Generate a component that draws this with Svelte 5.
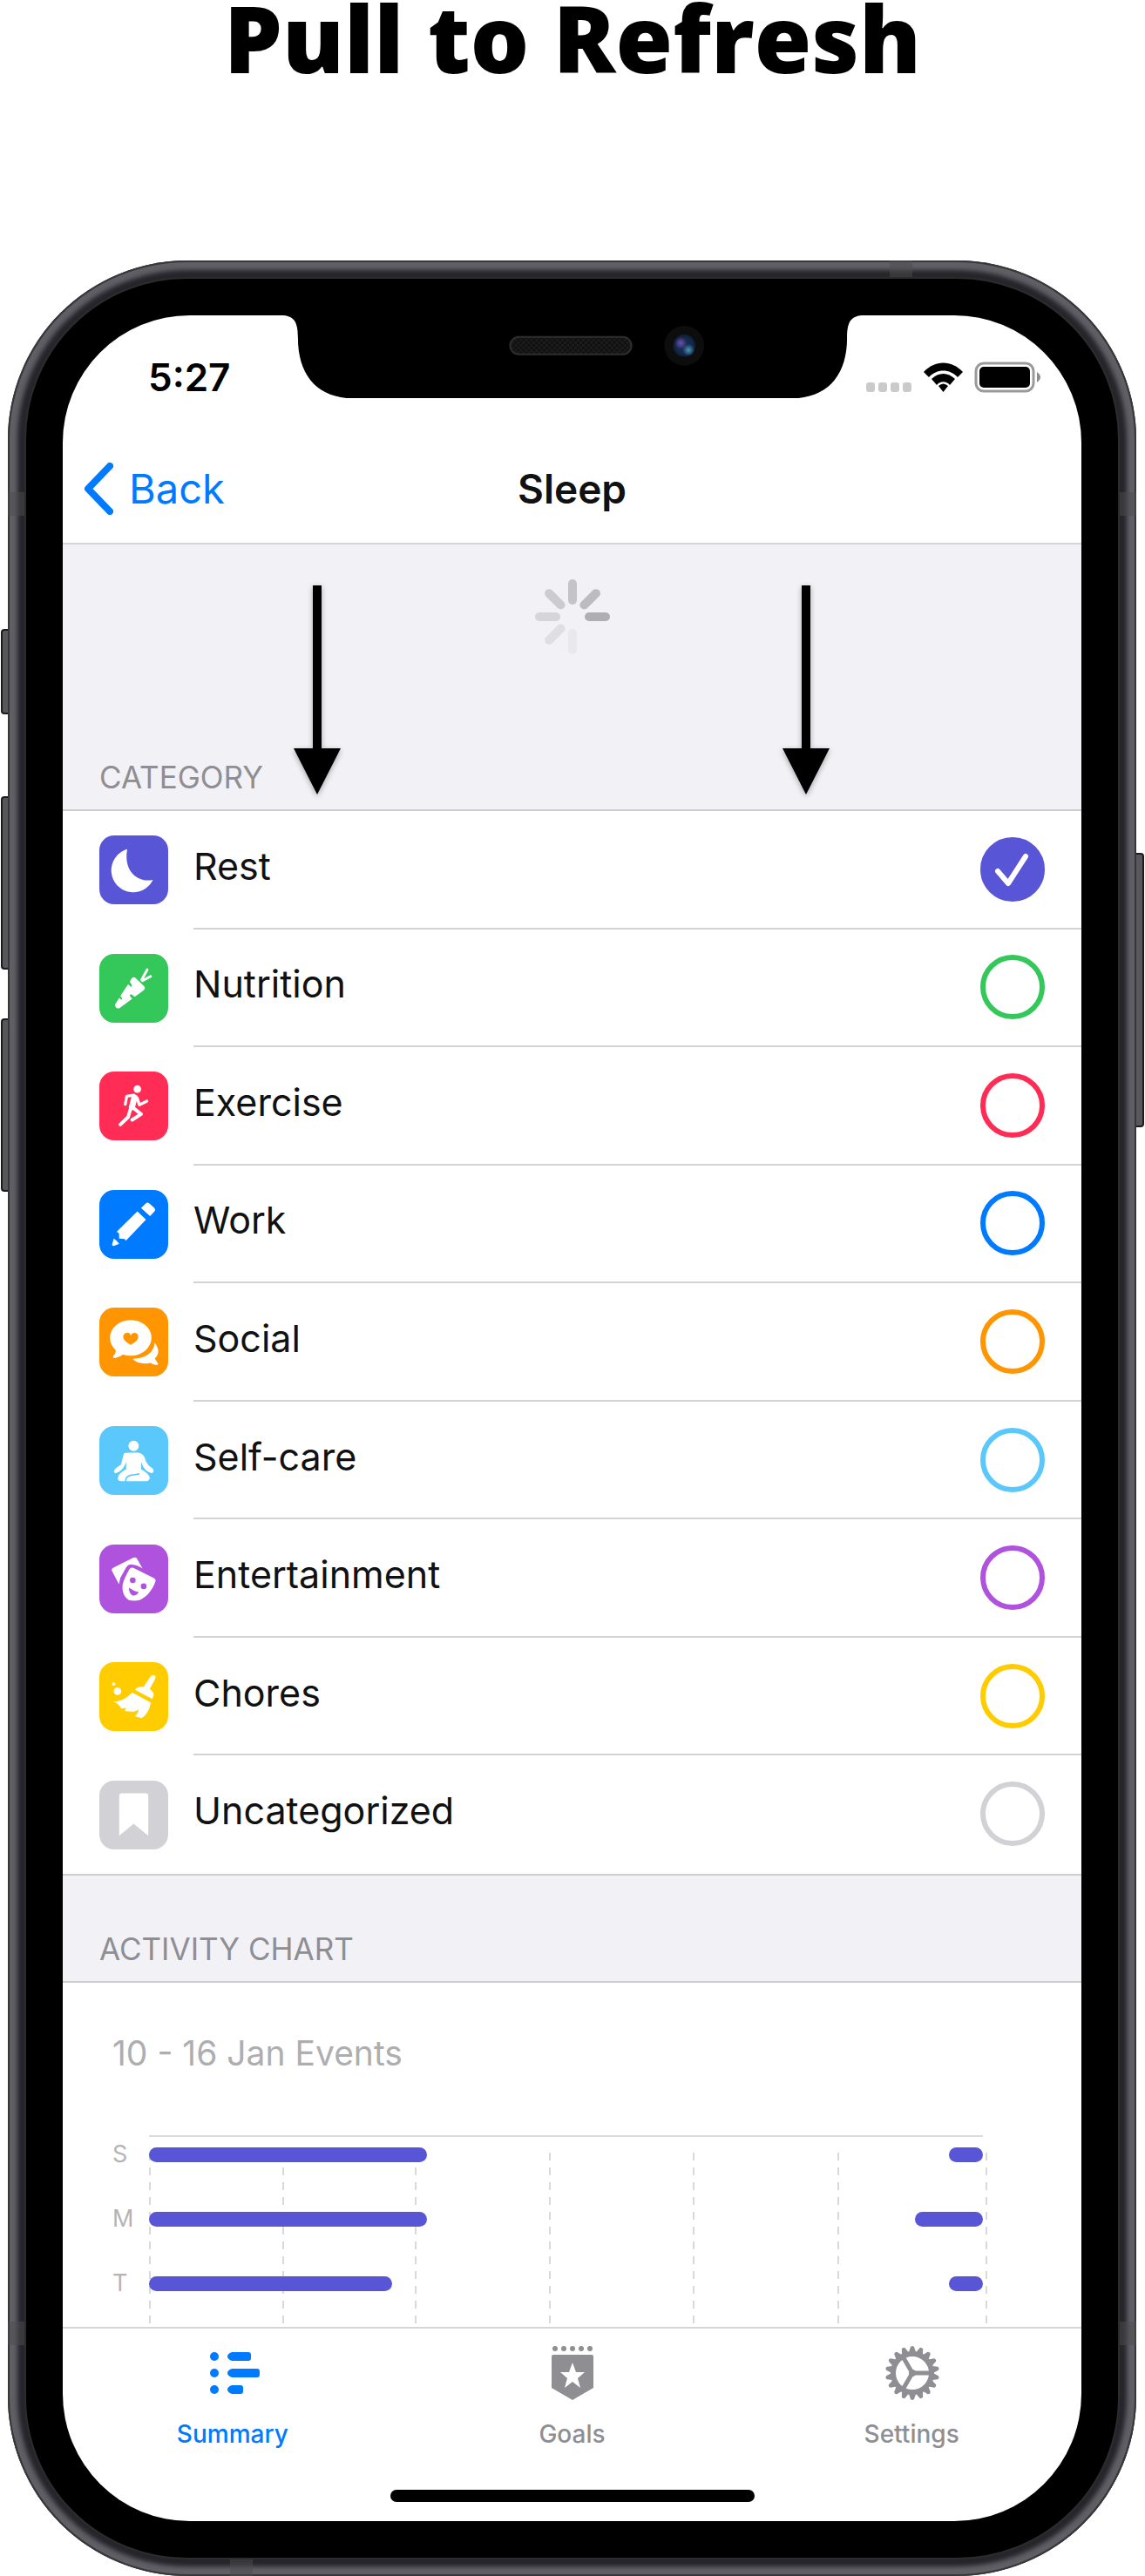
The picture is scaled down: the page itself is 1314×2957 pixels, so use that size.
<script>
  const categories = [
    { id: 'rest', name: 'Rest', color: '#5856d6' },
    { id: 'nutrition', name: 'Nutrition', color: '#34c759' },
    { id: 'exercise', name: 'Exercise', color: '#ff2d55' },
    { id: 'work', name: 'Work', color: '#007aff' },
    { id: 'social', name: 'Social', color: '#ff9500' },
    { id: 'selfcare', name: 'Self-care', color: '#5ac8fa' },
    { id: 'entertainment', name: 'Entertainment', color: '#af52de' },
    { id: 'chores', name: 'Chores', color: '#ffcc00' },
    { id: 'uncategorized', name: 'Uncategorized', color: '#d1d1d6' }
  ];
  let selected = $state('rest');

  // Bar starts and widths, in percent of the plotted day
  const days = [
    { day: 'S', bars: [{ from: 0, width: 33.3 }, { from: 95.9, width: 4.1 }] },
    { day: 'M', bars: [{ from: 0, width: 33.3 }, { from: 91.9, width: 8.1 }] },
    { day: 'T', bars: [{ from: 0, width: 29.2 }, { from: 95.9, width: 4.1 }] }
  ];
  const gridlines = [0, 16, 31.9, 48, 65.2, 82.5, 100.3];

  const spokes = [
    { angle: 90, color: '#aeaeb3' },
    { angle: 45, color: '#bbbbc0' },
    { angle: 0, color: '#c3c3c8' },
    { angle: 315, color: '#cbcbd0' },
    { angle: 270, color: '#d5d5da' },
    { angle: 225, color: '#dedee3' },
    { angle: 180, color: '#e8e8ed' }
  ];
  const teeth = Array.from({ length: 18 }, (_, i) => i * 20);
</script>

{#snippet pullArrow(side)}
  <svg class="arrow {side}" viewBox="0 0 54 240" aria-hidden="true">
    <path d="M22 0h10v187h22L27 240 0 187h22z" />
  </svg>
{/snippet}

<main>
  <h1>Pull to Refresh</h1>

  <div class="phone">
    <i class="key mute"></i>
    <i class="key up"></i>
    <i class="key down"></i>
    <i class="key power"></i>
    <i class="band top"></i>
    <i class="band bottom"></i>
    <i class="band side left high"></i>
    <i class="band side right high"></i>
    <i class="band side left low"></i>
    <i class="band side right low"></i>

    <div class="bezel">
      <div class="screen">
        <svg class="notch" viewBox="0 0 668 96" aria-hidden="true">
          <defs>
            <radialGradient id="lens">
              <stop offset="0" stop-color="#1c2f55" />
              <stop offset="0.7" stop-color="#14294a" />
              <stop offset="1" stop-color="#0e1c30" />
            </radialGradient>
            <radialGradient id="violet">
              <stop offset="0" stop-color="#7150b0" />
              <stop offset="1" stop-color="#7150b0" stop-opacity="0" />
            </radialGradient>
            <radialGradient id="cyan">
              <stop offset="0" stop-color="#4797b8" />
              <stop offset="1" stop-color="#4797b8" stop-opacity="0" />
            </radialGradient>
            <pattern id="mesh" width="6" height="6" patternUnits="userSpaceOnUse">
              <rect width="6" height="6" fill="#101010" />
              <path d="M0 0h3v3H0zM3 3h3v3H3z" fill="#1c1c1c" />
            </pattern>
          </defs>
          <path d="M0 0C14 1 17 10 17 26C17 70 40 96 82 96H586C628 96 651 70 651 26C651 10 654 1 668 0Z" />
          <rect x="262" y="25" width="140" height="20" rx="10" fill="url(#mesh)" stroke="#2e2e2e" stroke-width="2" />
          <circle cx="463" cy="35" r="23" fill="#0d0d0d" />
          <circle cx="463" cy="35" r="13" fill="url(#lens)" />
          <circle cx="459" cy="32" r="7" fill="url(#violet)" />
          <circle cx="468" cy="40" r="7" fill="url(#cyan)" />
        </svg>

        <div class="status">
          <time>5:27</time>
          <svg class="signals" viewBox="0 0 200 36" aria-hidden="true">
            <g fill="#cacaca">
              <rect x="0" y="24" width="10" height="11" rx="3" />
              <rect x="14" y="24" width="10" height="11" rx="3" />
              <rect x="28" y="24" width="10" height="11" rx="3" />
              <rect x="42" y="24" width="10" height="11" rx="3" />
            </g>
            <path d="M66 12C79-2 98-2 111 12L105 18C96 8 81 8 72 18Z" />
            <path d="M75 20C83 12 94 12 102 20L96 27C92 22 85 22 81 27Z" />
            <path d="M83 28Q88.500 23 94 28L88.500 35Z" />
            <rect x="126" y="2" width="66" height="32" rx="9" fill="none" stroke="#9a9a9a" stroke-width="3" />
            <rect x="130" y="6" width="58" height="24" rx="5" />
            <path d="M196 12Q200 15 200 18T196 24Z" fill="#8c8c8c" />
          </svg>
        </div>

        <nav class="bar" aria-label="Navigation">
          <button type="button" class="back">
            <svg viewBox="0 0 34 60" aria-hidden="true">
              <path d="M30 4 5 30 30 56" />
            </svg>
            Back
          </button>
          <h2>Sleep</h2>
        </nav>

        <section class="pull">
          {@render pullArrow('first')}
          <svg class="spinner" viewBox="-43 -43 86 86" role="img" aria-label="Refreshing">
            {#each spokes as spoke}
              <rect x="-5" y="-43" width="10" height="29" rx="5" fill={spoke.color} transform="rotate({spoke.angle})" />
            {/each}
          </svg>
          {@render pullArrow('second')}
          <h3>CATEGORY</h3>
        </section>

        <div class="list" role="radiogroup" aria-label="Category">
          {#each categories as cat}
            <label class="row" style:--tint={cat.color}>
              <svg class="icon" viewBox="28 14 239 239" aria-hidden="true">
                {#if cat.id === 'rest'}
                  <path d="M125 62A76 76 0 1 0 214 168C165 180 110 140 125 62Z" />
                {:else if cat.id === 'nutrition'}
                  <path d="M83 189 97 167 104 173Q109 172 107 168L101 160 128 119 137 128Q142 128 141 123L134 111 140 99Q147 91 154 98L184 127Q189 134 182 140L151 163 139 154Q133 154 134 160L142 170 98 202Q82 206 83 189Z" />
                  <path class="line" d="M194 69 175 104M206 92 178 107" stroke-width="9" />
                {:else if cat.id === 'exercise'}
                  <circle cx="160" cy="75" r="13" />
                  <path class="line" d="M118 128 123 100 148 96M159 105 167 130 193 117" stroke-width="10" />
                  <path class="line" d="M150 104 141 138" stroke-width="21" />
                  <path class="line" d="M138 138 128 172 101 198M143 138 173 162 142 182" stroke-width="12" />
                {:else if cat.id === 'work'}
                  <path d="M173 77 189 61Q195 55 202 61L218 75Q225 82 219 89L204 105ZM160 88 190 117 120 190 116 184 97 183 96 164 88 159ZM78 183Q90 190 97 201L78 208Q70 208 73 201Z" />
                {:else if cat.id === 'social'}
                  <ellipse cx="137" cy="119" rx="72" ry="62" />
                  <path d="M84 155Q88 172 76 182 74 190 84 189 102 184 112 176ZM220 136C236 156 237 176 221 190Q224 199 232 208 233 215 224 213 213 211 206 206C180 212 153 205 144 192 190 191 218 170 220 136Z" />
                  <path class="cut" d="M137 143C120 133 111 125 111 115A13 12 0 0 1 137 112 13 12 0 0 1 163 115C163 125 154 133 137 143Z" />
                {:else if cat.id === 'selfcare'}
                  <circle cx="147" cy="83" r="18" />
                  <path d="M131 106H163Q180 108 186 125 191 148 214 162 221 173 210 178C190 171 180 160 173 138V164Q203 182 203 194 202 205 190 205H104Q92 204 92 196 92 180 121 164V138C114 160 104 171 84 178 73 173 80 162 103 148 107 138 108 125 114 108 131 106Z" />
                  <path class="slit" d="M120 207Q117 187 142 184L167 180" />
                {:else if cat.id === 'entertainment'}
                  <path d="M71 104Q69 98 77 94L145 60Q153 56 158 62L178 97C165 88 150 84 138 83Q128 83 122 92L101 130 96 152ZM133 99Q137 92 146 95L216 130Q225 135 223 142C213 170 195 195 168 207Q150 212 130 207C112 195 106 175 109 152Q115 130 133 99Z" />
                  <circle class="cut" cx="144" cy="138" r="10" />
                  <circle class="cut" cx="182" cy="159" r="10" />
                  <path class="cut" d="M131 164Q147 176 165 180 155 194 142 190 130 182 131 164Z" />
                {:else if cat.id === 'chores'}
                  <circle cx="78" cy="90" r="6" />
                  <circle cx="91" cy="115" r="13" />
                  <path d="M205 65Q213 54 222 61 225 65 221 74L203 107Q215 115 217 126L212 142 152 110Q160 98 181 100ZM142 119 207 155Q200 192 176 208L152 202Q161 194 165 178 150 188 142 186L118 184Q116 180 122 171 112 178 103 174 99 160 75 151 115 150 142 119Z" />
                {:else}
                  <path d="M97 67Q97 58 106 58H189Q198 58 198 67V205L147 164 97 205Z" />
                {/if}
              </svg>
              <span class="name">{cat.name}</span>
              <span class="choice">
                <input type="radio" name="category" value={cat.id} bind:group={selected} />
                {#if selected === cat.id}
                  <svg viewBox="0 0 74 74" aria-hidden="true"><path d="M20 39 32 53 52 22" /></svg>
                {/if}
              </span>
            </label>
          {/each}
        </div>

        <section class="heading">
          <h3>ACTIVITY CHART</h3>
        </section>

        <section class="chart">
          <h4>10 - 16 Jan Events</h4>
          <div class="plot">
            {#each gridlines as x}
              <i class="gridline" style:left="{x}%"></i>
            {/each}
            {#each days as d}
              <div class="day">
                <span class="letter">{d.day}</span>
                <div class="track">
                  {#each d.bars as bar}
                    <i class="event" style:left="{bar.from}%" style:width="{bar.width}%"></i>
                  {/each}
                </div>
              </div>
            {/each}
          </div>
        </section>

        <nav class="tabs" aria-label="Sections">
          <div class="items">
            <a href="#summary" class="active" aria-current="page">
              <svg viewBox="0 0 64 64" aria-hidden="true">
                <circle cx="11" cy="13" r="5" /><circle cx="11" cy="32" r="5" /><circle cx="11" cy="51" r="5" />
                <path d="M31 8H50Q53 8 53 11V15Q53 18 50 18H31Q26 16 26 13T31 8ZM31 27H60Q63 27 63 30V34Q63 37 60 37H31Q26 35 26 32T31 27ZM31 46H41Q44 46 44 49V53Q44 56 41 56H31Q26 54 26 51T31 46Z" />
              </svg>
              Summary
            </a>
            <a href="#goals">
              <svg viewBox="0 0 64 64" aria-hidden="true">
                <circle cx="13" cy="4" r="3" /><circle cx="23" cy="4" r="3" /><circle cx="33" cy="4" r="3" /><circle cx="43" cy="4" r="3" /><circle cx="53" cy="4" r="3" />
                <path d="M11 11H55Q57 11 57 13V49L33 63 9 49V13Q9 11 11 11Z" />
                <path class="star" d="M33 20 37 31 47 31 39 38 42 49 33 42 24 49 27 38 19 31 29 31Z" />
              </svg>
              Goals
            </a>
            <a href="#settings">
              <svg class="gear" viewBox="-33 -32 64 64" aria-hidden="true">
                <circle r="22" />
                <path d="M0 0H22M0 0-11-19M0 0-11 19" />
                {#each teeth as angle}
                  <path class="tooth" d="M-4-24-2-30Q0-32 2-30L4-24Z" transform="rotate({angle})" />
                {/each}
                <circle class="hub" r="4" />
              </svg>
              Settings
            </a>
          </div>
          <i class="home"></i>
        </nav>
      </div>
    </div>
  </div>
</main>

<style>
  :global(body) {
    margin: 0;
    background: #fff;
  }
  main {
    font-family: Inter, "Noto Sans", sans-serif;
    color: #111;
  }
  h1,
  h2,
  h3,
  h4 {
    margin: 0;
    font-weight: 400;
  }
  h1 {
    padding-bottom: 213px;
    font-family: Futura, "Open Sans", sans-serif;
    font-weight: 800;
    font-size: 106px;
    line-height: 86px;
    text-align: center;
    color: #000;
  }

  /* Device */
  .phone {
    position: relative;
    margin: 0 10px 0 9px;
    padding: 19px;
    border-radius: 206px;
    background: #26252b;
    box-shadow:
      inset 0 0 0 2px #37373a,
      inset 0 0 5px 11px #605f65;
  }
  .bezel {
    position: relative;
    padding: 42px;
    border: 2px solid #2c2c2c;
    border-radius: 186px;
    background: #000;
  }
  .key {
    position: absolute;
    left: -8px;
    width: 8px;
    box-sizing: border-box;
    border: 2px solid #1c1c1e;
    border-right: 0;
    border-radius: 4px 0 0 4px;
    background: #58575c;
  }
  .mute {
    top: 423px;
    height: 98px;
  }
  .up {
    top: 615px;
    height: 199px;
  }
  .down {
    top: 870px;
    height: 199px;
  }
  .power {
    top: 680px;
    left: auto;
    right: -9px;
    width: 9px;
    height: 315px;
    border: 2px solid #1c1c1e;
    border-left: 0;
    border-radius: 0 4px 4px 0;
  }
  .band {
    position: absolute;
    width: 26px;
    height: 19px;
    background: #4c4c4f;
    opacity: 0.5;
  }
  .band.top {
    top: 0;
    right: 257px;
  }
  .band.bottom {
    bottom: 0;
    left: 255px;
  }
  .band.side {
    width: 19px;
    height: 27px;
  }
  .left {
    left: 0;
  }
  .right {
    right: 0;
  }
  .high {
    top: 266px;
  }
  .low {
    bottom: 265px;
  }
  .screen {
    position: relative;
    overflow: hidden;
    border-radius: 146px;
    background: #fff;
  }
  .notch {
    position: absolute;
    top: 0;
    left: 50%;
    width: 664px;
    margin-left: -332px;
  }

  /* Status and navigation bars */
  .status {
    display: flex;
    align-items: center;
    justify-content: space-between;
    height: 130px;
    padding: 6px 47px 0 98px;
  }
  .status time {
    font-size: 44px;
    font-weight: 600;
    color: #000;
  }
  .signals {
    width: 200px;
  }
  .bar {
    display: grid;
    grid-template-columns: 1fr auto 1fr;
    align-items: center;
    height: 125px;
    padding: 0 24px;
    border-bottom: 2px solid #d6d6d8;
  }
  .back {
    display: flex;
    align-items: center;
    gap: 18px;
    justify-self: start;
    padding: 0;
    border: 0;
    background: none;
    font: inherit;
    font-size: 47px;
    color: #007aff;
  }
  .back svg {
    width: 34px;
    fill: none;
    stroke: #007aff;
    stroke-width: 8px;
    stroke-linecap: round;
    stroke-linejoin: round;
  }
  h2 {
    font-size: 46px;
    font-weight: 600;
  }

  /* Pulled-down area and section headers */
  .pull,
  .heading {
    border-bottom: 2px solid #cdcdd0;
    background: #f2f1f6;
  }
  .pull {
    display: grid;
    grid-template-columns: 1fr 86px 1fr;
    padding: 0 42px 17px;
  }
  .arrow {
    grid-row: 1 / 3;
    width: 54px;
    margin-top: 47px;
    filter: drop-shadow(0 2px 3px #0005);
  }
  .first {
    grid-column: 1;
    margin-left: 223px;
  }
  .second {
    grid-column: 3;
    margin-left: 198px;
  }
  .spinner {
    grid-area: 1 / 2;
    width: 86px;
    margin-top: 40px;
  }
  h3 {
    font-size: 35px;
    line-height: 40px;
    color: #8e8e93;
  }
  .pull h3 {
    grid-area: 2 / 1;
    align-self: end;
  }
  .heading {
    padding: 64px 42px 17px;
  }

  /* Category list */
  .list {
    display: grid;
    grid-auto-rows: 1fr;
    min-height: 1220px;
    border-bottom: 2px solid #cdcdd0;
  }
  .row {
    display: grid;
    grid-template-columns: 79px 1fr auto;
    grid-template-rows: 1fr;
    column-gap: 29px;
    align-items: center;
    padding-left: 42px;
  }
  .icon {
    width: 79px;
    border-radius: 17px;
    background: var(--tint);
    fill: #fff;
  }
  .line {
    fill: none;
    stroke: #fff;
    stroke-linecap: round;
    stroke-linejoin: round;
  }
  .cut {
    fill: var(--tint);
  }
  .slit {
    fill: none;
    stroke: var(--tint);
    stroke-width: 5px;
  }
  .name,
  .choice {
    display: flex;
    align-items: center;
    align-self: stretch;
    box-sizing: border-box;
    border-bottom: 2px solid #d3d3d6;
  }
  .name {
    padding-bottom: 8px;
    font-size: 43px;
  }
  .choice {
    display: grid;
    align-content: center;
    margin-left: -29px;
    padding-right: 42px;
  }
  .row:last-child .name,
  .row:last-child .choice {
    border-color: transparent;
  }
  .choice input,
  .choice svg {
    grid-area: 1 / 1;
    width: 74px;
    height: 74px;
  }
  .choice input {
    appearance: none;
    box-sizing: border-box;
    margin: 0;
    border: 6px solid var(--tint);
    border-radius: 50%;
  }
  .choice input:checked {
    background: var(--tint);
  }
  .choice svg {
    z-index: 1;
    pointer-events: none;
    fill: none;
    stroke: #fff;
    stroke-width: 6px;
    stroke-linecap: round;
    stroke-linejoin: round;
  }

  /* Chart */
  .chart {
    padding: 57px 113px 0 57px;
  }
  h4 {
    font-size: 39px;
    line-height: 48px;
    color: #aeaeb0;
  }
  .plot {
    position: relative;
    margin: 70px 0 0 42px;
    padding-top: 12px;
    border-top: 2px solid #dcdcdd;
  }
  .gridline {
    position: absolute;
    top: 18px;
    bottom: 0;
    width: 2px;
    background: repeating-linear-gradient(#d9d9da 0 9px, transparent 9px 17px);
  }
  .day {
    position: relative;
    display: grid;
    grid-template-columns: 42px 1fr;
    margin-left: -42px;
    height: 74px;
  }
  .day:last-child {
    height: 58px;
  }
  .letter {
    font-size: 27px;
    line-height: 16px;
    color: #b4b4b6;
  }
  .track {
    position: relative;
    height: 17px;
  }
  .event {
    position: absolute;
    height: 17px;
    border-radius: 9px;
    background: #5856d6;
  }

  /* Tab bar */
  .tabs {
    padding: 19px 0 22px;
    border-top: 2px solid #d6d6d8;
  }
  .items {
    display: grid;
    grid-template-columns: repeat(3, 1fr);
  }
  .items a {
    display: grid;
    justify-items: center;
    gap: 20px;
    font-size: 28px;
    line-height: 36px;
    font-weight: 500;
    text-decoration: none;
    color: #8e8e93;
  }
  .items a.active {
    color: #007aff;
  }
  .items svg {
    width: 64px;
    fill: currentColor;
  }
  .items .star {
    fill: #fff;
  }
  .items .gear {
    fill: none;
    stroke: currentColor;
    stroke-width: 6px;
  }
  .gear path {
    stroke-width: 5px;
  }
  .gear .tooth,
  .gear .hub {
    fill: currentColor;
    stroke: none;
  }
  .home {
    display: block;
    width: 418px;
    height: 14px;
    margin: 46px auto 0;
    border-radius: 7px;
    background: #000;
  }
</style>
